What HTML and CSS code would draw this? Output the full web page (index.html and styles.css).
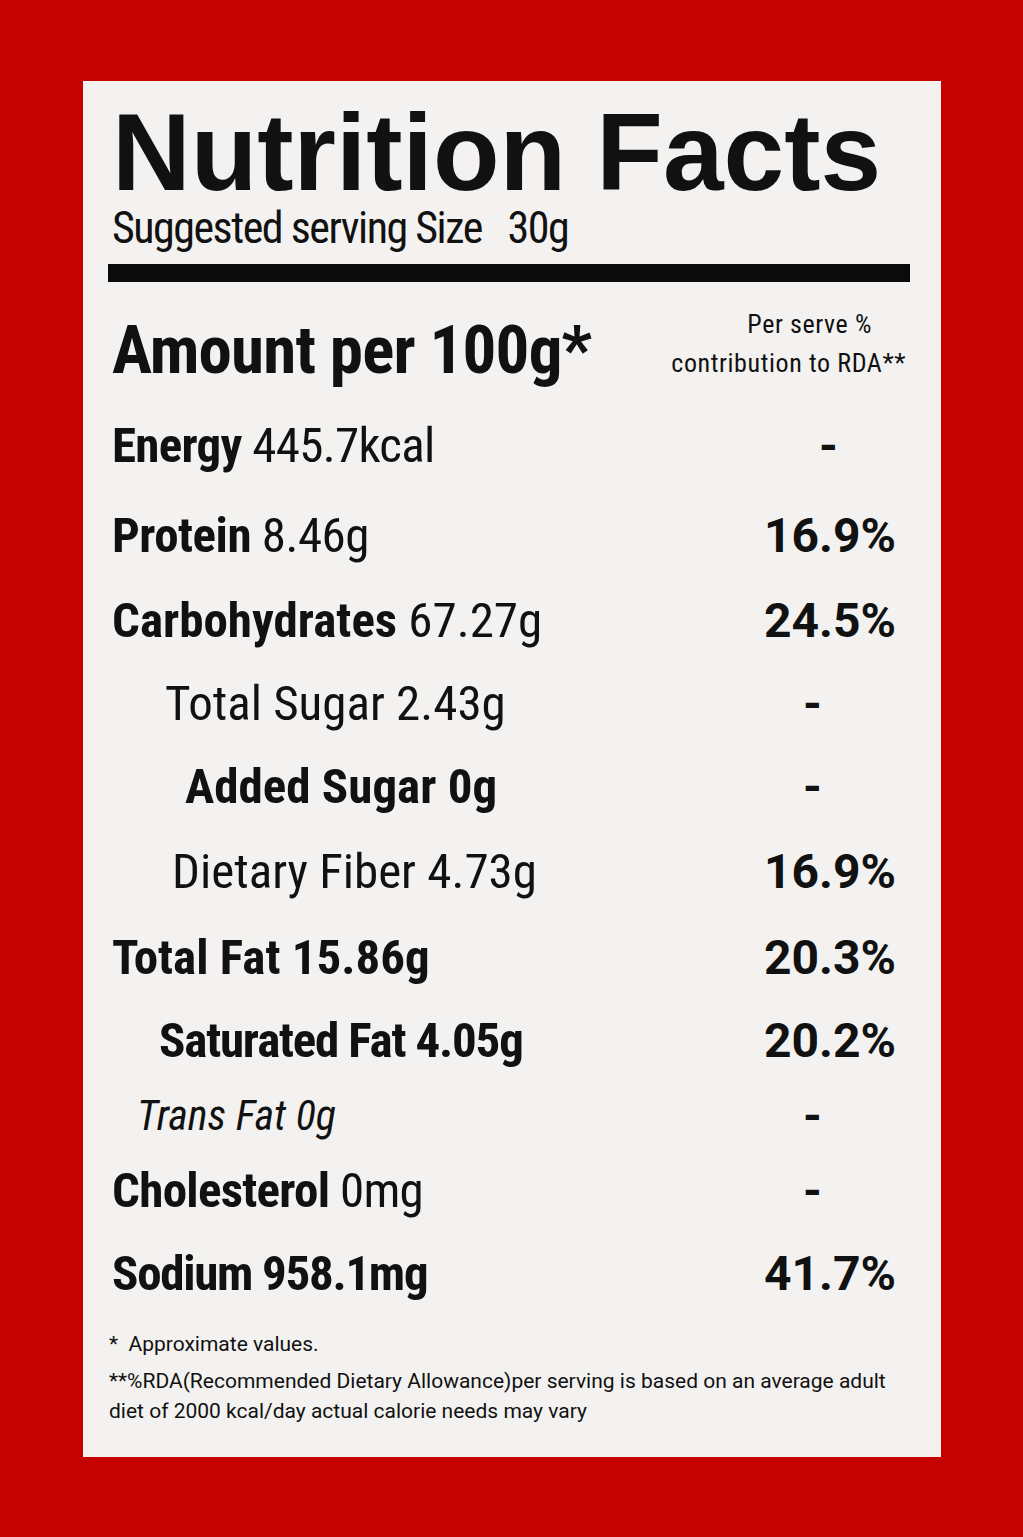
FILE: index.html
```html
<!DOCTYPE html>
<html lang="en">
<head>
<meta charset="utf-8">
<title>Nutrition Facts</title>
<link rel="stylesheet" href="styles.css">
</head>
<body>
<main class="panel">
  <h1 class="title">Nutrition Facts</h1>
  <p class="serving">Suggested serving Size&nbsp;&nbsp; 30g</p>
  <div class="rule"></div>
  <div class="head">
    <div class="head-left">Amount per 100g*</div>
    <div class="head-right">
      <span class="hr-1">Per serve %</span>
      <span class="hr-2">contribution to RDA**</span>
    </div>
  </div>
  <div class="row r-energy"><span class="name"><b>Energy</b> 445.7kcal</span><span class="val"><span class="dash dash-energy">-</span></span></div>
  <div class="row r-protein"><span class="name"><b>Protein</b> 8.46g</span><span class="val">16.9%</span></div>
  <div class="row r-carbs"><span class="name"><b>Carbohydrates</b> 67.27g</span><span class="val">24.5%</span></div>
  <div class="row r-sugar"><span class="name ind-sugar">Total Sugar 2.43g</span><span class="val"><span class="dash">-</span></span></div>
  <div class="row r-added"><span class="name ind-added"><b>Added Sugar 0g</b></span><span class="val"><span class="dash">-</span></span></div>
  <div class="row r-fiber"><span class="name ind-fiber">Dietary Fiber 4.73g</span><span class="val">16.9%</span></div>
  <div class="row r-fat"><span class="name"><b>Total Fat 15.86g</b></span><span class="val">20.3%</span></div>
  <div class="row r-sat"><span class="name ind-sat"><b>Saturated Fat 4.05g</b></span><span class="val">20.2%</span></div>
  <div class="row r-trans"><span class="name ind-trans trans">Trans Fat 0g</span><span class="val"><span class="dash">-</span></span></div>
  <div class="row r-chol"><span class="name"><b>Cholesterol</b> 0mg</span><span class="val"><span class="dash">-</span></span></div>
  <div class="row r-sodium"><span class="name"><b>Sodium 958.1mg</b></span><span class="val">41.7%</span></div>
  <p class="note note-1">*&nbsp; Approximate values.</p>
  <p class="note note-2">**%RDA(Recommended Dietary Allowance)per serving is based on an average adult diet of 2000 kcal/day actual calorie needs may vary</p>
</main>
</body>
</html>
```

FILE: styles.css
```css
html, body {
  margin: 0;
  padding: 0;
}

body {
  background: #c40202;
  width: 1023px;
  height: 1537px;
  overflow: hidden;
  color: #111;
}

.panel {
  margin: 81px 0 0 83px;
  width: 858px;
  height: 1376px;
  box-sizing: border-box;
  padding: 19px 45px 0 29px;
  background: #f3f2f0;
  font-family: "Roboto Condensed", "Roboto", sans-serif;
  font-stretch: 87.5%;
}

.title {
  margin: 0;
  font-family: "Liberation Sans", Arial, sans-serif;
  font-weight: 700;
  font-size: 109px;
  line-height: 104px;
  letter-spacing: 0;
  white-space: nowrap;
}

.serving {
  margin: 0;
  font-size: 44px;
  line-height: 48px;
  font-weight: 400;
  letter-spacing: -1.5px;
  white-space: nowrap;
}

.rule {
  margin: 12px -14px 0 -4px;
  height: 18px;
  background: #0b0b0b;
}

.head {
  display: flex;
  justify-content: space-between;
  align-items: flex-start;
  height: 117px;
  box-sizing: border-box;
  padding-top: 23px;
}

.head-left {
  margin-top: 5px;
  font-size: 67px;
  line-height: 80px;
  font-weight: 700;
  letter-spacing: -0.8px;
  white-space: nowrap;
}

.head-right {
  display: flex;
  flex-direction: column;
  align-items: center;
  margin-right: -10px;
  font-size: 26px;
  line-height: 39px;
  letter-spacing: 0.6px;
  white-space: nowrap;
}

.hr-1 {
  padding-left: 42px;
}

.row {
  display: flex;
  justify-content: space-between;
  font-size: 49px;
  white-space: nowrap;
}

.row b {
  font-weight: 700;
}

.val {
  font-family: "Roboto", sans-serif;
  font-stretch: 100%;
  font-weight: 700;
  font-size: 48px;
}

.dash {
  display: inline-block;
  margin-right: 74px;
}

.dash-energy {
  margin-right: 58px;
}

.r-energy { height: 94px; line-height: 94px; }
.r-protein { height: 86px; line-height: 86px; }
.r-carbs { height: 84px; line-height: 84px; }
.r-sugar { height: 81px; line-height: 81px; }
.r-added { height: 86px; line-height: 86px; }
.r-fiber { height: 84px; line-height: 84px; }
.r-fat { height: 87px; line-height: 87px; }
.r-sat { height: 80px; line-height: 80px; }
.r-trans { height: 69px; line-height: 69px; }
.r-chol { height: 82px; line-height: 82px; }
.r-sodium { height: 84px; line-height: 84px; }

.r-energy .name { letter-spacing: -0.7px; }
.r-protein .name { letter-spacing: -0.5px; }
.r-sat .name { letter-spacing: -1.2px; }
.r-chol .name { letter-spacing: -0.7px; }
.r-sodium .name { letter-spacing: -1.3px; }

.ind-sugar { padding-left: 53px; }
.ind-added { padding-left: 73px; }
.ind-fiber { padding-left: 60px; }
.ind-sat { padding-left: 47px; }
.ind-trans { padding-left: 25px; }

.trans {
  font-style: italic;
  font-size: 42px;
}

.note {
  margin: 0 0 0 -3px;
  font-family: "Roboto", sans-serif;
  font-stretch: 100%;
  font-size: 21px;
  line-height: 30px;
}

.note-1 {
  margin-top: 13px;
}

.note-2 {
  margin-top: 7px;
  width: 790px;
}
```
